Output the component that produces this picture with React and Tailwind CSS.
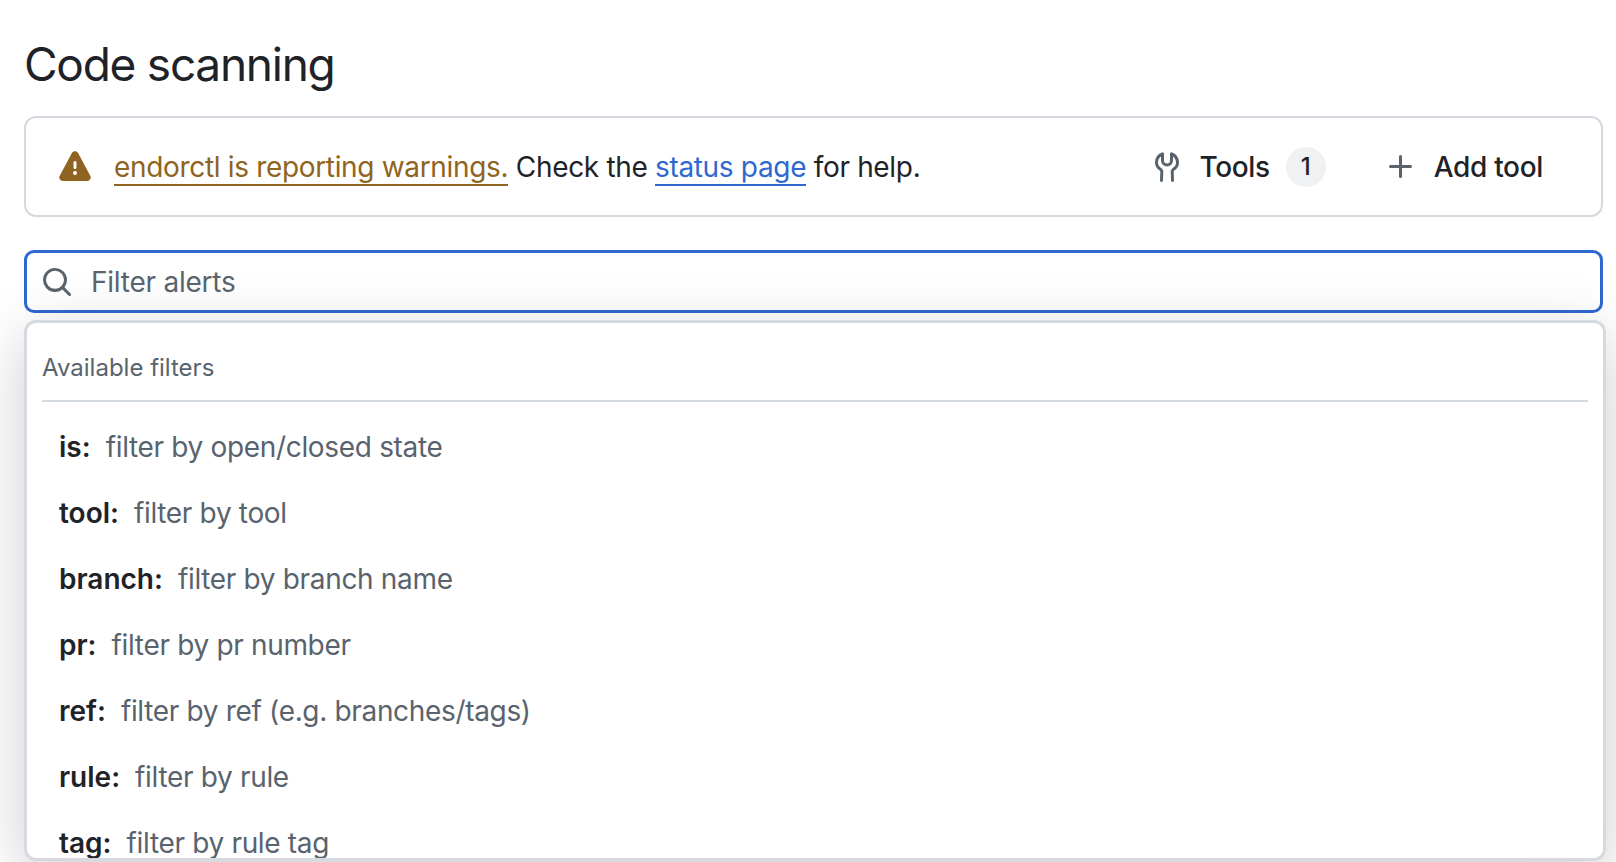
const filters = [
  ['is:', 'filter by open/closed state'],
  ['tool:', 'filter by tool'],
  ['branch:', 'filter by branch name'],
  ['pr:', 'filter by pr number'],
  ['ref:', 'filter by ref (e.g. branches/tags)'],
  ['rule:', 'filter by rule'],
  ['tag:', 'filter by rule tag'],
];

export default function App() {
  return (
    <div className="h-[862px] overflow-hidden bg-white pl-6 pr-[13px] font-['Inter',sans-serif] text-[#1f2328]">
      <h1 className="pt-[37px] pb-[24px] text-[46px] leading-[55px] font-normal tracking-[-1.25px]">Code scanning</h1>

      {/* Tool status banner */}
      <div className="flex h-[101px] items-center rounded-[12px] border-2 border-[#d5dae1] pl-[33px] pr-[58px]">
        <AlertIcon />
        <p className="ml-[23px] text-[28px] leading-[36px] tracking-[-0.33px]">
          <a className="border-b-2 border-[#8f6420] text-[#8f6420]">endorctl is reporting warnings.</a>
          <span> Check the </span>
          <a className="border-b-2 border-[#2f68d0] text-[#2f68d0]">status page</a>
          <span> for help.</span>
        </p>
        <div className="ml-auto flex items-center">
          <ToolsIcon />
          <span className="ml-[20px] text-[28px] font-medium tracking-[-0.33px]">Tools</span>
          <span className="ml-[16px] flex h-10 w-10 items-center justify-center rounded-full bg-[#eff1f3] text-[24px] font-medium">1</span>
          <PlusIcon />
          <span className="ml-[17px] text-[28px] font-medium tracking-[-0.33px]">Add tool</span>
        </div>
      </div>

      {/* Filter input: the dropdown's shadow gives it its grey tint */}
      <div className="mt-[33px] flex h-[63px] items-center rounded-[10px] border-[3px] border-[#2f68d0] pl-[14px]">
        <SearchIcon />
        <span className="ml-[18px] text-[28px] tracking-[-0.24px] text-[#59636e]">Filter alerts</span>
      </div>

      {/* Suggestions dropdown */}
      <div className="mt-[7px] -mr-[3px] h-[541px] overflow-hidden rounded-[12px] border-[3px] border-[#d5dae1] bg-white px-[15px] shadow-[0_16px_64px_rgba(0,0,0,0.2)]">
        <div className="flex h-[79px] items-center border-b-2 border-[#d5dae1] pt-[13px] text-[24px] text-[#59636e]">Available filters</div>
        <ul className="pt-[12px]">
          {filters.map(([key, desc]) => (
            <li key={key} className="flex h-[66px] items-center gap-[15px] pl-[17px] text-[28px]">
              <span className="font-semibold">{key}</span>
              <span className="tracking-[-0.33px] text-[#59636e]">{desc}</span>
            </li>
          ))}
        </ul>
      </div>
    </div>
  );
}

function AlertIcon() {
  return (
    <svg className="h-8 w-8 shrink-0" viewBox="0 0 16 16" fill="#8f6420">
      <path d="M6.457 1.047c.659-1.234 2.427-1.234 3.086 0l6.082 11.378A1.75 1.75 0 0 1 14.082 15H1.918a1.75 1.75 0 0 1-1.543-2.575ZM8 5a.75.75 0 0 0-.75.75v2.5a.75.75 0 0 0 1.5 0v-2.5A.75.75 0 0 0 8 5Zm1 6a1 1 0 1 0-2 0 1 1 0 0 0 2 0Z" />
    </svg>
  );
}

function ToolsIcon() {
  return (
    <svg className="h-[30px] w-[24px] shrink-0" viewBox="0 0 24 30" fill="none" stroke="#59636e" strokeWidth="3" strokeLinecap="round" strokeLinejoin="round">
      <path d="M7.5 2C3.5 3.5 1.5 7 1.5 10.5c0 3 1.7 5.5 4.3 7l1 1.5-.3 9.5" />
      <path d="M16.5 2c4 1.500 6 5 6 8.500 0 3-1.700 5.500-4.300 7l-1 1.500.3 9.500" />
      <path d="M7.500 2v6.500a4.500 4.500 0 0 0 9 0V2" />
    </svg>
  );
}

function PlusIcon() {
  return (
    <svg className="ml-[59px] h-8 w-8 shrink-0" viewBox="0 0 16 16" fill="#59636e">
      <path d="M7.750 2a.750.750 0 0 1 .750.750V7h4.250a.750.750 0 0 1 0 1.500H8.500v4.250a.750.750 0 0 1-1.500 0V8.500H2.750a.750.750 0 0 1 0-1.500H7V2.750A.750.750 0 0 1 7.750 2Z" />
    </svg>
  );
}

function SearchIcon() {
  return (
    <svg className="h-8 w-8 shrink-0" viewBox="0 0 16 16" fill="#59636e">
      <path d="M10.68 11.74a6 6 0 0 1-7.922-8.982 6 6 0 0 1 8.982 7.922l3.04 3.04a.749.749 0 0 1-.326 1.275.749.749 0 0 1-.734-.215ZM11.5 7a4.499 4.499 0 1 0-8.997 0A4.499 4.499 0 0 0 11.5 7Z" />
    </svg>
  );
}
